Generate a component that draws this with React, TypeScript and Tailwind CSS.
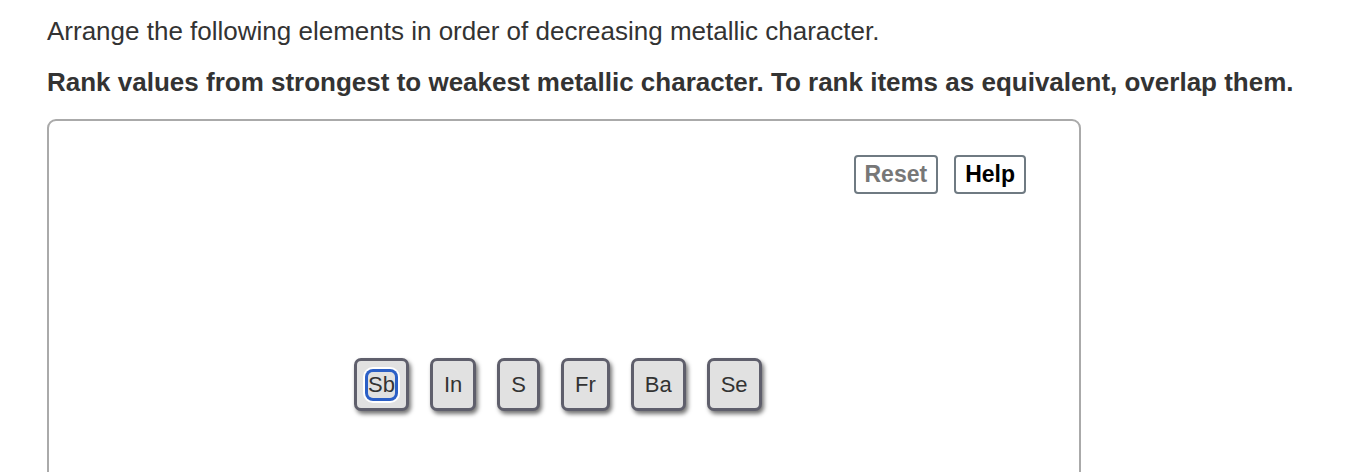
import React from "react";

const tiles = ["Sb", "In", "S", "Fr", "Ba", "Se"];

export default function App() {
  return (
    <div
      className="w-[1346px] h-[472px] overflow-hidden bg-white text-[#333] pl-[47px] pt-[16px]"
      style={{ fontFamily: '"Liberation Sans", Arial, Helvetica, sans-serif' }}
    >
      <p className="text-[26px] leading-[30px]">
        Arrange the following elements in order of decreasing metallic character.
      </p>
      <p className="mt-[21px] text-[26px] leading-[30px] font-bold">
        Rank values from strongest to weakest metallic character. To rank items as equivalent, overlap them.
      </p>
      <div className="mt-[22px] w-[1034px] h-[400px] border-2 border-[#aaaaaa] rounded-[9px] flex flex-col">
        <div className="flex justify-end gap-[16px] pt-[34px] pr-[53px]">
          <button className="h-[39px] px-[9px] border-2 border-[#6f7a82] rounded-[4px] bg-white text-[23px] font-bold text-[#777] leading-none">
            Reset
          </button>
          <button className="h-[39px] px-[9px] border-2 border-[#6f7a82] rounded-[4px] bg-white text-[23px] font-bold text-black leading-none">
            Help
          </button>
        </div>
        <div className="flex gap-[21px] pl-[305px] mt-[164px]">
          {tiles.map((t, i) => (
            <div
              key={t}
              className="h-[53px] px-[11px] border-[3px] border-[#5f5f6c] rounded-[7px] bg-[#e1e1e1] flex items-center text-[22px] text-[#333] shadow-[2px_3px_4px_rgba(0,0,0,0.55)]"
            >
              {i === 0 ? (
                <span className="leading-[26px] rounded-[5px] shadow-[0_0_0_3px_#2b5fc6,0_0_0_5px_white]">
                  {t}
                </span>
              ) : (
                <span className="leading-[26px]">{t}</span>
              )}
            </div>
          ))}
        </div>
      </div>
    </div>
  );
}
